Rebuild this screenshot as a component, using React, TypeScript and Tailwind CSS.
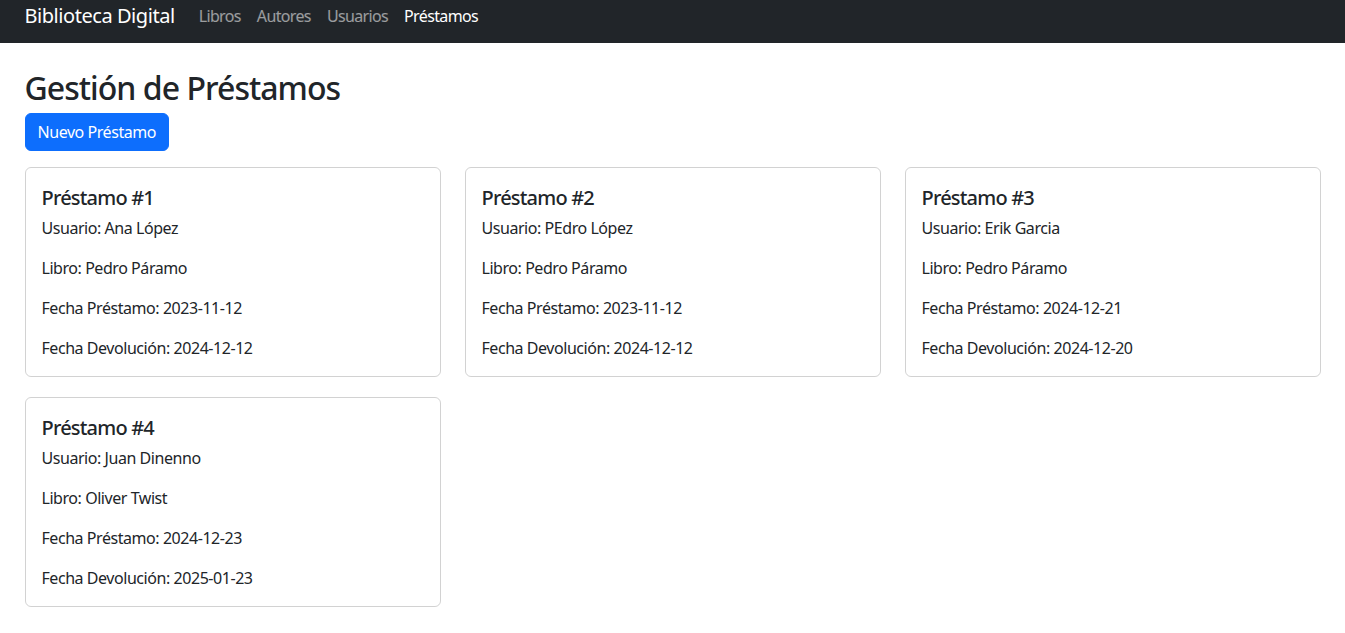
import React from "react";

const prestamos = [
  { id: 1, usuario: "Ana López", libro: "Pedro Páramo", fecha: "2023-11-12", devolucion: "2024-12-12" },
  { id: 2, usuario: "PEdro López", libro: "Pedro Páramo", fecha: "2023-11-12", devolucion: "2024-12-12" },
  { id: 3, usuario: "Erik Garcia", libro: "Pedro Páramo", fecha: "2024-12-21", devolucion: "2024-12-20" },
  { id: 4, usuario: "Juan Dinenno", libro: "Oliver Twist", fecha: "2024-12-23", devolucion: "2025-01-23" },
];

export default function App() {
  return (
    <div
      className="min-h-screen bg-white tracking-[-0.028em] text-[#212529]"
      style={{ fontFamily: '"Noto Sans", "Open Sans", sans-serif' }}
    >
      <nav className="h-[43px] bg-[#212529]">
        <div className="mx-auto flex max-w-[1320px] items-center px-3 pt-[4px]">
          <span className="mr-4 text-[20px] leading-[24px] text-white">Biblioteca Digital</span>
          <div className="flex text-[16px] leading-[24px] tracking-[-0.04em]">
            <span className="px-2 text-white/55">Libros</span>
            <span className="px-2 text-white/55">Autores</span>
            <span className="px-2 text-white/55">Usuarios</span>
            <span className="px-2 text-white">Préstamos</span>
          </div>
        </div>
      </nav>

      <main className="mx-auto mt-[24px] max-w-[1320px] px-3">
        <h2 className="mb-2 pt-[2px] text-[32px] font-medium leading-[38px] tracking-[-0.03em]">
          Gestión de Préstamos
        </h2>
        <button
          type="button"
          className="-mt-[2px] rounded-md border border-[#0d6efd] bg-[#0d6efd] px-3 py-[6px] text-[16px] leading-6 text-white"
        >
          Nuevo Préstamo
        </button>

        <div className="mt-4 grid grid-cols-3 gap-x-6 gap-y-5">
          {prestamos.map((p) => (
            <div key={p.id} className="rounded-md border border-black/[0.175] p-4">
              <h5 className="mb-[6px] pt-[2px] text-[20px] font-medium leading-6 tracking-[-0.04em]">
                Préstamo #{p.id}
              </h5>
              <div className="space-y-4 text-[16px] leading-6">
                <p>Usuario: {p.usuario}</p>
                <p>Libro: {p.libro}</p>
                <p>Fecha Préstamo: {p.fecha}</p>
                <p>Fecha Devolución: {p.devolucion}</p>
              </div>
            </div>
          ))}
        </div>
      </main>
    </div>
  );
}
